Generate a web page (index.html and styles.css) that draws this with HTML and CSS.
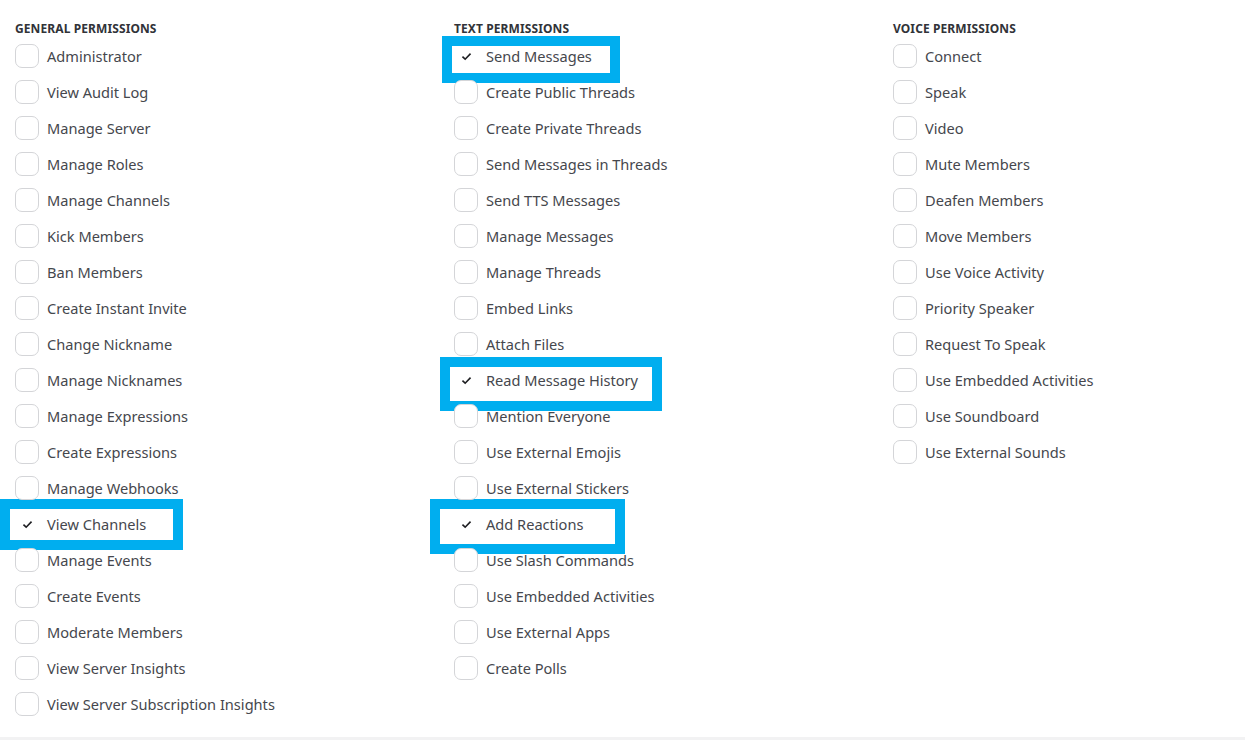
FILE: index.html
```html
<!DOCTYPE html>
<html lang="en">
<head>
  <meta charset="UTF-8">
  <title>Bot Permissions</title>
  <link rel="stylesheet" href="styles.css">
</head>
<body>
  <div class="perms">
    <div class="group">
      <h3>General Permissions</h3>
      <div class="row"><span class="box"></span><span class="label">Administrator</span></div>
      <div class="row"><span class="box"></span><span class="label">View Audit Log</span></div>
      <div class="row"><span class="box"></span><span class="label">Manage Server</span></div>
      <div class="row"><span class="box"></span><span class="label">Manage Roles</span></div>
      <div class="row"><span class="box"></span><span class="label">Manage Channels</span></div>
      <div class="row"><span class="box"></span><span class="label">Kick Members</span></div>
      <div class="row"><span class="box"></span><span class="label">Ban Members</span></div>
      <div class="row"><span class="box"></span><span class="label">Create Instant Invite</span></div>
      <div class="row"><span class="box"></span><span class="label">Change Nickname</span></div>
      <div class="row"><span class="box"></span><span class="label">Manage Nicknames</span></div>
      <div class="row"><span class="box"></span><span class="label">Manage Expressions</span></div>
      <div class="row"><span class="box"></span><span class="label">Create Expressions</span></div>
      <div class="row"><span class="box"></span><span class="label">Manage Webhooks</span></div>
      <div class="row checked">
        <span class="mark mark-view"></span>
        <span class="box"><svg viewBox="0 0 12 10"><path d="M1.5 5.2 L4.5 8 L10.5 1.8"/></svg></span>
        <span class="label">View Channels</span>
      </div>
      <div class="row"><span class="box"></span><span class="label">Manage Events</span></div>
      <div class="row"><span class="box"></span><span class="label">Create Events</span></div>
      <div class="row"><span class="box"></span><span class="label">Moderate Members</span></div>
      <div class="row"><span class="box"></span><span class="label">View Server Insights</span></div>
      <div class="row"><span class="box"></span><span class="label">View Server Subscription Insights</span></div>
    </div>

    <div class="group">
      <h3>Text Permissions</h3>
      <div class="row checked">
        <span class="mark mark-send"></span>
        <span class="box"><svg viewBox="0 0 12 10"><path d="M1.5 5.2 L4.5 8 L10.5 1.8"/></svg></span>
        <span class="label">Send Messages</span>
      </div>
      <div class="row"><span class="box"></span><span class="label">Create Public Threads</span></div>
      <div class="row"><span class="box"></span><span class="label">Create Private Threads</span></div>
      <div class="row"><span class="box"></span><span class="label">Send Messages in Threads</span></div>
      <div class="row"><span class="box"></span><span class="label">Send TTS Messages</span></div>
      <div class="row"><span class="box"></span><span class="label">Manage Messages</span></div>
      <div class="row"><span class="box"></span><span class="label">Manage Threads</span></div>
      <div class="row"><span class="box"></span><span class="label">Embed Links</span></div>
      <div class="row"><span class="box"></span><span class="label">Attach Files</span></div>
      <div class="row checked">
        <span class="mark mark-history"></span>
        <span class="box"><svg viewBox="0 0 12 10"><path d="M1.5 5.2 L4.5 8 L10.5 1.8"/></svg></span>
        <span class="label">Read Message History</span>
      </div>
      <div class="row"><span class="box"></span><span class="label">Mention Everyone</span></div>
      <div class="row"><span class="box"></span><span class="label">Use External Emojis</span></div>
      <div class="row"><span class="box"></span><span class="label">Use External Stickers</span></div>
      <div class="row checked">
        <span class="mark mark-react"></span>
        <span class="box"><svg viewBox="0 0 12 10"><path d="M1.5 5.2 L4.5 8 L10.5 1.8"/></svg></span>
        <span class="label">Add Reactions</span>
      </div>
      <div class="row"><span class="box"></span><span class="label">Use Slash Commands</span></div>
      <div class="row"><span class="box"></span><span class="label">Use Embedded Activities</span></div>
      <div class="row"><span class="box"></span><span class="label">Use External Apps</span></div>
      <div class="row"><span class="box"></span><span class="label">Create Polls</span></div>
    </div>

    <div class="group">
      <h3>Voice Permissions</h3>
      <div class="row"><span class="box"></span><span class="label">Connect</span></div>
      <div class="row"><span class="box"></span><span class="label">Speak</span></div>
      <div class="row"><span class="box"></span><span class="label">Video</span></div>
      <div class="row"><span class="box"></span><span class="label">Mute Members</span></div>
      <div class="row"><span class="box"></span><span class="label">Deafen Members</span></div>
      <div class="row"><span class="box"></span><span class="label">Move Members</span></div>
      <div class="row"><span class="box"></span><span class="label">Use Voice Activity</span></div>
      <div class="row"><span class="box"></span><span class="label">Priority Speaker</span></div>
      <div class="row"><span class="box"></span><span class="label">Request To Speak</span></div>
      <div class="row"><span class="box"></span><span class="label">Use Embedded Activities</span></div>
      <div class="row"><span class="box"></span><span class="label">Use Soundboard</span></div>
      <div class="row"><span class="box"></span><span class="label">Use External Sounds</span></div>
    </div>
  </div>
  <div class="divider"></div>
</body>
</html>
```

FILE: styles.css
```css
* {
  margin: 0;
  padding: 0;
  box-sizing: border-box;
}

body {
  font-family: 'Noto Sans', 'Open Sans', sans-serif;
  background: #fff;
  color: #4e5058;
  overflow: hidden;
}

.perms {
  display: grid;
  grid-template-columns: 439px 439px 1fr;
  padding: 20px 0 0 15px;
  height: 737px;
}

h3 {
  font-size: 12px;
  font-weight: 700;
  text-transform: uppercase;
  color: #313338;
  line-height: 18px;
  height: 18px;
  letter-spacing: 0.1px;
}

.row {
  position: relative;
  display: flex;
  align-items: center;
  height: 36px;
}

.box {
  position: relative;
  z-index: 1;
  width: 24px;
  height: 24px;
  border: 1px solid #d4d5d8;
  border-radius: 7px;
  background: #fff;
  display: flex;
  align-items: center;
  justify-content: center;
  flex-shrink: 0;
}

.box svg {
  width: 11px;
  height: 9px;
  fill: none;
  stroke: #1e1f22;
  stroke-width: 1.8;
}

.checked .box {
  border-color: transparent;
  background: transparent;
}

.label {
  position: relative;
  z-index: 1;
  margin-left: 8px;
  font-size: 14.6px;
  color: #45474d;
  white-space: nowrap;
}

.mark {
  position: absolute;
  z-index: 0;
  border: 10px solid #00aeef;
  background: #fff;
}

.mark-view {
  left: -15px;
  top: -7px;
  width: 183px;
  height: 51px;
}

.mark-send {
  left: -12px;
  top: -2px;
  width: 178px;
  height: 47px;
}

.mark-history {
  left: -14px;
  top: -5px;
  width: 222px;
  height: 54px;
}

.mark-react {
  left: -24px;
  top: -7px;
  width: 195px;
  height: 55px;
}

.divider {
  height: 3px;
  background: #f2f2f3;
}
```
